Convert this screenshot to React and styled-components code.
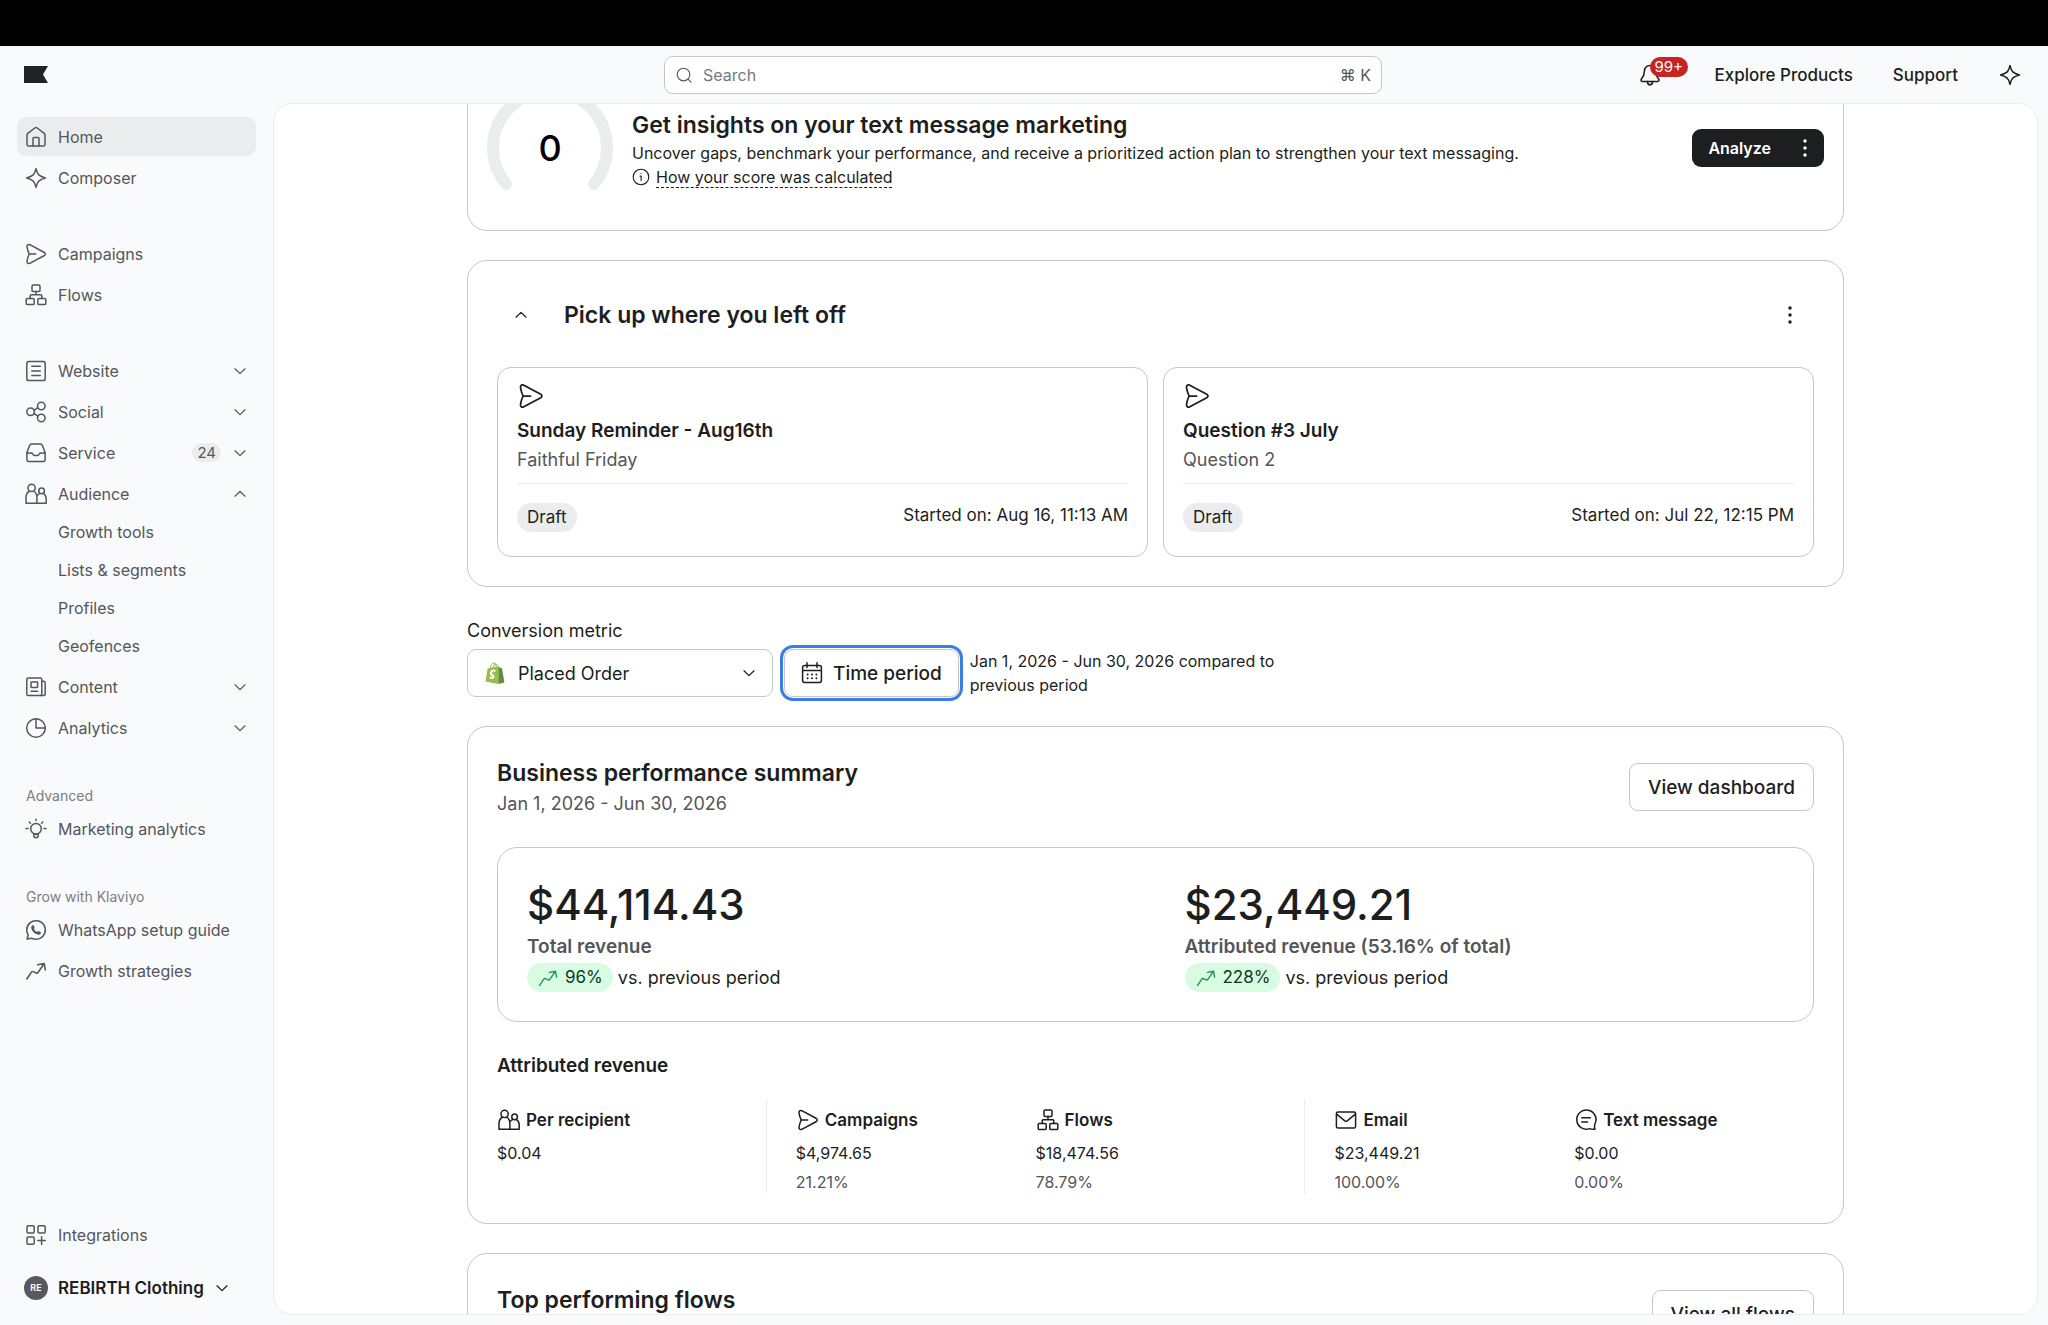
import React, { useLayoutEffect, useRef } from 'react';
import styled, { createGlobalStyle, css } from 'styled-components';

const ink = '#1d1e20';
const muted = '#54565a';
const line = '#c3c6ce';
const soft = '#ebecee';
const canvas = '#f9fafc';

const GlobalStyle = createGlobalStyle`
  * {
    box-sizing: border-box;
  }
  body {
    margin: 0;
    background: ${canvas};
    color: ${ink};
    font-family: Inter, "Liberation Sans", sans-serif;
    font-size: 16px;
  }
  h1, h2, h3, p, ul, dl, dd, dt {
    margin: 0;
    padding: 0;
  }
  button, input, select {
    font: inherit;
    color: inherit;
  }
  button {
    cursor: pointer;
  }
  a {
    color: inherit;
    text-decoration: none;
  }
`;

/* ---------- icons ---------- */

const Svg = styled.svg`
  display: block;
  flex: none;
  fill: none;
  stroke: currentColor;
  stroke-width: 1.5;
  stroke-linecap: round;
  stroke-linejoin: round;
`;

const shapes = {
  home: (
    <>
      <path d="M3 10.2Q3 8.9 4 8.1L10.8 3Q12 2.2 13.2 3L20 8.1Q21 8.9 21 10.2V19.4Q21 21 19.4 21H4.6Q3 21 3 19.4Z" />
      <path d="M9 21V13.4Q9 12.5 9.9 12.5H14.1Q15 12.5 15 13.4V21" />
    </>
  ),
  sparkle: (
    <path d="M12 2.6C12.6 5 13.4 7.4 14.8 8.9C16.4 10.4 18.8 11.3 21.4 12C18.8 12.7 16.4 13.6 14.8 15.1C13.4 16.6 12.6 19 12 21.4C11.4 19 10.6 16.6 9.2 15.1C7.6 13.6 5.2 12.7 2.6 12C5.2 11.3 7.6 10.4 9.2 8.9C10.6 7.4 11.4 5 12 2.6Z" />
  ),
  send: (
    <>
      <path d="M5.8 2.7L20.4 10.5Q22.4 12 20.4 13.5L5.8 21.3Q2.9 22.2 3 19.2Q3.6 15.4 5.2 12Q3.6 8.6 3 4.8Q2.9 1.8 5.8 2.7Z" />
      <path d="M5.2 12H11.6" />
    </>
  ),
  flows: (
    <>
      <rect x="8" y="2" width="8" height="6.4" rx="1.2" />
      <rect x="2.2" y="15.4" width="8" height="6.2" rx="1.2" />
      <rect x="13.8" y="15.4" width="8" height="6.2" rx="1.2" />
      <path d="M12 8.4V11.8M6.2 15.4V12.8Q6.2 11.8 7.2 11.8H16.8Q17.8 11.8 17.8 12.8V15.4" />
    </>
  ),
  page: (
    <>
      <rect x="2.8" y="2.5" width="18.4" height="19" rx="1.8" />
      <path d="M7.8 7.3H16.3M7.8 12H16.3M7.8 16.5H16.3" />
    </>
  ),
  share: (
    <>
      <circle cx="6.6" cy="11.8" r="3.8" />
      <circle cx="17.3" cy="6" r="3.8" />
      <circle cx="17.3" cy="18" r="3.8" />
      <path d="M10.1 10.3L13.8 7.7M10.1 13.4L13.8 16.1" />
    </>
  ),
  inbox: (
    <>
      <path d="M5.6 4.6Q6.1 3 7.6 3H16.4Q17.9 3 18.4 4.6L21.1 11.5V18.6Q21.1 20.4 19.3 20.4H4.7Q2.9 20.4 2.9 18.6V11.5Z" />
      <path d="M2.9 11.9H7Q8.2 11.9 8.8 13Q9.4 14.4 10.8 14.4H13.2Q14.6 14.4 15.2 13Q15.8 11.9 17 11.9H21.1" />
    </>
  ),
  people: (
    <>
      <circle cx="7.6" cy="5.9" r="3.6" />
      <path d="M5.6 9C3 10.6 2 12.6 2 15.6V21.2H22.2V17C22.2 14.4 21.2 12.6 19.2 11.4M9.6 9C12 10.6 12.9 12.6 12.9 15.6V21.2M13.4 13.3Q14.2 12 15.9 11.4" />
      <circle cx="17.6" cy="8.9" r="2.8" />
    </>
  ),
  content: (
    <>
      <rect x="2.8" y="3" width="15" height="17.6" rx="1.6" />
      <path d="M17.8 6.2H19.4Q21.2 6.2 21.2 8V18.8Q21.2 20.6 19.4 20.6H16.4" />
      <rect x="7" y="7" width="6.6" height="5.4" rx=".6" />
      <path d="M7 16.3H13.6" />
    </>
  ),
  pie: (
    <>
      <circle cx="12" cy="12" r="9.3" />
      <path d="M12 2.7V12H21.3" />
    </>
  ),
  bulb: (
    <>
      <path d="M9.8 17V18.6Q9.8 20.8 12 20.8Q14.2 20.8 14.2 18.6V17M12 2.2V3.4M2 11.4H4M20 11.4H22M5.2 5L6.4 6.2M18.8 5L17.6 6.2M9.8 17.2H14.2" />
      <circle cx="12" cy="11.8" r="5.3" />
    </>
  ),
  whatsapp: (
    <>
      <path d="M3 21L4.2 17Q2.7 14.6 2.7 12A9.3 9.3 0 1 1 7.6 20.2Z" />
      <path
        d="M8.6 7.2Q9.4 6.8 9.8 7.6L10.6 9.4Q10.8 9.9 10.4 10.4L9.9 11Q11 13 13.1 14L13.9 13.3Q14.3 12.9 14.9 13.2L16.5 14.1Q17.1 14.5 16.8 15.2Q16 16.9 14.1 16.7Q8.2 15.4 7.2 10Q7 8 8.6 7.2Z"
        fill="currentColor"
        stroke="none"
      />
    </>
  ),
  trend: <path d="M2.8 20L7.6 13Q8.2 12.2 9.2 12.6L12.4 14Q13.4 14.4 14 13.5L20 4.8M13.6 5.8L20.2 4.6L21.4 11" />,
  apps: (
    <>
      <rect x="3" y="2.8" width="7.2" height="7.2" rx="1.2" />
      <rect x="14" y="2.8" width="7.2" height="7.2" rx="1.2" />
      <rect x="3" y="14" width="7.2" height="7.2" rx="1.2" />
      <path d="M17.6 13.8V21.4M13.8 17.6H21.4" />
    </>
  ),
  bell: (
    <>
      <path d="M12 2.4C8.6 2.4 6.6 4.8 6.4 8.4C6.2 12 5.4 13.6 3.6 15.8C2.6 17.2 2.8 18.4 4.4 18.4H19.6C21.2 18.4 21.4 17.2 20.4 15.8C18.6 13.6 17.8 12 17.6 8.4C17.4 4.8 15.4 2.4 12 2.4Z" />
      <path d="M9.4 18.6Q9.6 21.8 12 21.8Q14.4 21.8 14.6 18.6" />
    </>
  ),
  search: (
    <>
      <circle cx="11.4" cy="11.4" r="8.4" />
      <path d="M17.4 17.4L21.4 21.4" />
    </>
  ),
  info: (
    <>
      <circle cx="12" cy="12" r="10.4" />
      <path d="M10.6 10.8H12.2V16.6M12.1 7.2V7.4" />
    </>
  ),
  calendar: (
    <>
      <path d="M2.6 6.4Q2.6 4.4 4.6 4.4H19.4Q21.4 4.4 21.4 6.4V19.4Q21.4 21.4 19.4 21.4H4.6Q2.6 21.4 2.6 19.4ZM2.6 9.4H21.4M7 1.8V6.4M17 1.8V6.4" />
      <path d="M7.6 13.4V13.5M12 13.4V13.5M16.4 13.4V13.5M7.6 17.2V17.3M12 17.2V17.3M16.4 17.2V17.3" strokeWidth="2" />
    </>
  ),
  mail: (
    <>
      <rect x="2.4" y="4" width="19.2" height="16" rx="1.6" />
      <path d="M3 6.4L10.8 12.8Q12 13.6 13.2 12.8L21 6.4" />
    </>
  ),
  message: (
    <>
      <path d="M20.8 16.2A9.6 9.6 0 1 0 15.6 20.6Q18 21.6 21 21.2Q20 19 20.8 16.2Z" />
      <path d="M7.8 9.8H16.2M7.8 14H13.6" />
    </>
  ),
  dots: (
    <g fill="currentColor" stroke="none">
      <circle cx="12" cy="3.6" r="2.1" />
      <circle cx="12" cy="12" r="2.1" />
      <circle cx="12" cy="20.4" r="2.1" />
    </g>
  ),
};

const Icon = ({ name, size = 24 }) => (
  <Svg width={size} height={size} viewBox="0 0 24 24" aria-hidden="true">
    {shapes[name]}
  </Svg>
);

const Chevron = ({ up }) => (
  <Svg width="12" height="12" viewBox="0 0 12 12" aria-hidden="true">
    <path d={up ? 'M1 8.2L6 3.4L11 8.2' : 'M1 3.8L6 8.6L11 3.8'} strokeWidth="1.25" />
  </Svg>
);

const ShopifyBag = () => (
  <svg width="20" height="22" viewBox="0 0 20 22" aria-hidden="true">
    <path d="M5 6.4C5.4 3.4 7.2 1 9 1C10.6 1 11.2 3 11.2 5.4M7.8 5.8C8.2 3.4 9.6 2 10.8 2C12 2 12.4 3.2 12.6 4.4" fill="none" stroke="#95bf47" strokeWidth="1" />
    <path d="M2.6 6.6L13.2 4.2L13.4 22L.4 19.6Z" fill="#95bf47" />
    <path d="M13.2 4.2L15 5.8L17 6L19.4 20.6L13.4 22Z" fill="#5e8e3e" />
    <path d="M10.4 8.9Q7.4 7.8 6.1 10Q5.4 12 7.4 13Q9.2 14.2 8 15.6Q6.8 16.4 4.8 15.2" fill="none" stroke="#fff" strokeWidth="2.1" />
  </svg>
);

/* ---------- frame ---------- */

const Shell = styled.div`
  height: 100vh;
  display: flex;
  flex-direction: column;
`;

const TopStrip = styled.div`
  height: 46px;
  flex: none;
  background: #000;
`;

const Header = styled.header`
  flex: none;
  height: 57px;
  padding: 0 26px 0 24px;
  display: grid;
  grid-template-columns: 1fr minmax(0, 718px) 1fr;
  align-items: center;
`;

const SearchBox = styled.label`
  height: 38px;
  padding: 0 10px;
  display: flex;
  align-items: center;
  gap: 10px;
  background: #fff;
  border: 1px solid ${line};
  border-radius: 9px;
  color: ${muted};

  input {
    flex: 1;
    min-width: 0;
    padding: 0;
    border: 0;
    outline: 0;
    background: none;
  }
  input::placeholder {
    color: #76787c;
    opacity: 1;
  }
  kbd {
    font: inherit;
  }
`;

const HeaderActions = styled.nav`
  display: flex;
  justify-content: flex-end;
  align-items: center;
  gap: 40px;
  font-size: 17px;
  font-weight: 500;
`;

const IconButton = styled.button`
  position: relative;
  display: flex;
  padding: 0;
  border: 0;
  background: none;
`;

const AlertCount = styled.span`
  position: absolute;
  left: 12px;
  top: -6px;
  padding: 0 5px;
  border-radius: 10px;
  background: #c82222;
  color: #fff;
  font-size: 15px;
  font-weight: 400;
  line-height: 20px;
`;

const AlertButton = styled(IconButton)`
  margin-right: 13px;
`;

const Body = styled.div`
  flex: 1;
  min-height: 0;
  display: flex;
  padding: 0 10px 10px 0;
`;

/* ---------- sidebar ---------- */

const Sidebar = styled.nav`
  width: 273px;
  flex: none;
  padding: 14px 17px 8px;
  display: flex;
  flex-direction: column;
  color: ${muted};
`;

const NavGroup = styled.div`
  display: flex;
  flex-direction: column;
  gap: 2px;
  margin-bottom: 37px;
`;

const NavLabel = styled.h3`
  padding-left: 9px;
  font-size: 14px;
  font-weight: 400;
  line-height: 23px;
  color: #7b7d81;
`;

const NavItem = styled.a`
  height: 39px;
  padding: 0 10px 0 7px;
  display: flex;
  align-items: center;
  gap: 10px;
  border-radius: 9px;
  background: ${(props) => (props.$active ? soft : 'transparent')};
`;

const NavText = styled.span`
  flex: 1;
  white-space: nowrap;
`;

const NavCount = styled.span`
  padding: 0 5px;
  margin-right: 3px;
  border-radius: 10px;
  background: ${soft};
  font-size: 15px;
  line-height: 19px;
`;

const SubList = styled.ul`
  list-style: none;
  margin-top: -2px;

  a {
    display: block;
    padding-left: 41px;
    line-height: 38px;
  }
`;

const NavFoot = styled.div`
  margin-top: auto;
  display: flex;
  flex-direction: column;
  gap: 14px;
`;

const Account = styled.button`
  height: 39px;
  padding: 0 7px;
  display: flex;
  align-items: center;
  gap: 10px;
  border: 0;
  background: none;
  color: ${ink};
  font-size: 17px;
  font-weight: 600;

  > svg {
    margin-left: 2px;
  }
`;

const Avatar = styled.span`
  width: 24px;
  height: 24px;
  border-radius: 50%;
  background: #58595c;
  color: #fff;
  font-size: 9px;
  line-height: 24px;
  text-align: center;
`;

const navGroups = [
  {
    items: [
      { icon: 'home', text: 'Home', active: true },
      { icon: 'sparkle', text: 'Composer' },
    ],
  },
  {
    items: [
      { icon: 'send', text: 'Campaigns' },
      { icon: 'flows', text: 'Flows' },
    ],
  },
  {
    items: [
      { icon: 'page', text: 'Website', fold: 'down' },
      { icon: 'share', text: 'Social', fold: 'down' },
      { icon: 'inbox', text: 'Service', fold: 'down', count: 24 },
      {
        icon: 'people',
        text: 'Audience',
        fold: 'up',
        children: ['Growth tools', 'Lists & segments', 'Profiles', 'Geofences'],
      },
      { icon: 'content', text: 'Content', fold: 'down' },
      { icon: 'pie', text: 'Analytics', fold: 'down' },
    ],
  },
  { label: 'Advanced', items: [{ icon: 'bulb', text: 'Marketing analytics' }] },
  {
    label: 'Grow with Klaviyo',
    items: [
      { icon: 'whatsapp', text: 'WhatsApp setup guide' },
      { icon: 'trend', text: 'Growth strategies' },
    ],
  },
];

const NavEntry = ({ item }) => (
  <>
    <NavItem href="#" $active={item.active}>
      <Icon name={item.icon} />
      <NavText>{item.text}</NavText>
      {item.count && <NavCount>{item.count}</NavCount>}
      {item.fold && <Chevron up={item.fold === 'up'} />}
    </NavItem>
    {item.children && (
      <SubList>
        {item.children.map((child) => (
          <li key={child}>
            <a href="#">{child}</a>
          </li>
        ))}
      </SubList>
    )}
  </>
);

/* ---------- content ---------- */

const Panel = styled.main`
  flex: 1;
  min-width: 0;
  overflow-y: auto;
  scrollbar-width: none;
  background: #fff;
  border: 1px solid #e9ebee;
  border-radius: 20px;
`;

const Column = styled.div`
  max-width: 1377px;
  margin: 0 auto;
  padding: 24px 0;
  display: flex;
  flex-direction: column;
  gap: 29px;
`;

const Card = styled.section`
  padding: 29px;
  border: 1px solid ${line};
  border-radius: 20px;
`;

const ScoreCard = styled(Card)`
  padding: 19px;
  display: flex;
  align-items: center;
  gap: 19px;
`;

const Gauge = styled.svg`
  flex: none;
  width: 126px;
  height: 126px;

  path {
    fill: none;
    stroke: ${soft};
    stroke-width: 12;
    stroke-linecap: round;
  }
  text {
    fill: #000;
    font-size: 36px;
    font-weight: 500;
    text-anchor: middle;
  }
`;

const ScoreText = styled.div`
  flex: 1;
  padding-top: 2px;
  line-height: 24px;
`;

const Title = styled.h2`
  font-size: 23px;
  font-weight: 600;
  line-height: 32px;
`;

const HelpLine = styled.p`
  display: flex;
  align-items: center;
  gap: 6px;

  a {
    text-decoration: underline dashed 1px;
    text-underline-offset: 4px;
  }
`;

const SplitButton = styled.div`
  display: flex;
  height: 38px;
  border-radius: 9px;
  overflow: hidden;

  button {
    padding: 0 16px;
    display: flex;
    align-items: center;
    border: 0;
    background: ${ink};
    color: #fff;
    font-weight: 600;
  }
  button + button {
    padding: 0 9px 0 8px;
  }
`;

const FoldHead = styled.div`
  height: 50px;
  padding: 0 14px 0 18px;
  display: flex;
  align-items: center;
  margin-bottom: 27px;

  h2 {
    flex: 1;
    margin-left: 37px;
  }
`;

const DraftGrid = styled.div`
  display: grid;
  grid-template-columns: 1fr 1fr;
  gap: 15px;
`;

const DraftCard = styled.article`
  padding: 14px 19px 24px;
  border: 1px solid ${line};
  border-radius: 14px;
  font-size: 18px;
  line-height: 29px;

  > svg {
    margin-bottom: 6px;
  }
  h3 {
    font-size: 19px;
    font-weight: 600;
  }
  p {
    color: ${muted};
  }
`;

const DraftFoot = styled.div`
  margin-top: 9px;
  padding-top: 19px;
  border-top: 1px solid ${soft};
  display: flex;
  justify-content: space-between;
  align-items: flex-start;
  font-size: 17px;
  line-height: 24px;
`;

const pill = css`
  padding: 0 10px;
  border-radius: 15px;
  font-size: 17px;
  line-height: 29px;
`;

const Tag = styled.span`
  ${pill}
  background: ${soft};
`;

const Rise = styled.span`
  ${pill}
  display: inline-flex;
  align-items: center;
  gap: 6px;
  background: #d9fbe2;
  color: #0c3a22;

  svg {
    color: #1f9254;
  }
`;

const Filters = styled.div`
  font-size: 18px;

  > label {
    display: block;
    line-height: 29px;
    margin-bottom: 4px;
  }
`;

const FilterRow = styled.div`
  display: flex;
  align-items: center;
  gap: 11px;
`;

const outlined = css`
  height: 48px;
  border: 1px solid ${line};
  border-radius: 9px;
  background: #fff;
`;

const SelectBox = styled.div`
  display: grid;
  grid-template: 1fr / 18px 20px 1fr 12px 18px;
  width: 306px;
  align-items: center;

  > * {
    grid-row: 1;
  }
  > svg {
    z-index: 1;
    pointer-events: none;
  }
  > svg:first-of-type {
    grid-column: 2;
  }
  > svg:last-of-type {
    grid-column: 4;
  }
  select {
    ${outlined}
    grid-column: 1 / -1;
    width: 100%;
    padding: 0 50px;
    appearance: none;
  }
`;

const OutlineButton = styled.button`
  ${outlined}
  padding: 0 18px;
  font-size: 19px;
  font-weight: 500;
`;

const PeriodButton = styled(OutlineButton)`
  padding: 0 16px 0 15px;
  display: flex;
  align-items: center;
  gap: 9px;
  outline: 3px solid #3a7de8;
  outline-offset: 1px;
`;

const PeriodNote = styled.p`
  max-width: 320px;
  font-size: 16px;
  line-height: 24px;
`;

const CardHead = styled.div`
  display: flex;
  justify-content: space-between;
  align-items: center;

  > div {
    min-height: 62px;
  }
  h2 {
    line-height: 34px;
  }
  p {
    font-size: 18px;
    line-height: 28px;
    color: ${muted};
  }
`;

const Totals = styled.div`
  margin: 29px 0;
  display: grid;
  grid-template-columns: 1fr 1fr;
  border: 1px solid ${line};
  border-radius: 20px;
`;

const Total = styled.div`
  padding: 29px;
  font-size: 18px;

  strong {
    display: block;
    font-size: 42px;
    font-weight: 500;
    line-height: 55px;
  }
  h3 {
    margin-bottom: 1px;
    font-size: 19px;
    font-weight: 600;
    line-height: 30px;
    color: ${muted};
  }
  p {
    display: flex;
    align-items: center;
    gap: 5px;
  }
`;

const SectionTitle = styled.h3`
  font-size: 19px;
  font-weight: 600;
  line-height: 30px;
`;

const Metrics = styled.dl`
  margin-top: 18px;
  display: flex;
  gap: 29px;
`;

const Metric = styled.div`
  flex: 1 1 0;
  padding-top: 9px;
  line-height: 24px;

  dt {
    display: flex;
    gap: 5px;
    margin-bottom: 9px;
    font-size: 17px;
    font-weight: 600;
  }
  dd + dd {
    margin-top: 5px;
    color: ${muted};
  }
`;

const MetricPair = styled.div`
  flex: 2 1 0;
  display: flex;
`;

const Divider = styled.div`
  width: 1px;
  background: ${soft};
`;

const MetricCell = ({ icon, name, value, share }) => (
  <Metric>
    <dt>
      <Icon name={icon} />
      {name}
    </dt>
    <dd>{value}</dd>
    {share && <dd>{share}</dd>}
  </Metric>
);

const Draft = ({ title, subtitle, started }) => (
  <DraftCard>
    <Icon name="send" size={28} />
    <h3>{title}</h3>
    <p>{subtitle}</p>
    <DraftFoot>
      <Tag>Draft</Tag>
      <span>Started on: {started}</span>
    </DraftFoot>
  </DraftCard>
);

const TotalCell = ({ amount, label, change }) => (
  <Total>
    <strong>{amount}</strong>
    <h3>{label}</h3>
    <p>
      <Rise>
        <Icon name="trend" size={22} />
        {change}
      </Rise>
      vs. previous period
    </p>
  </Total>
);

function App() {
  const panel = useRef(null);

  // the page opens a little way down, past the top of the score card
  useLayoutEffect(() => {
    panel.current.scrollTop = 63;
  }, []);

  return (
    <>
      <GlobalStyle />
      <Shell>
        <TopStrip />
        <Header>
          <svg width="24" height="17" viewBox="0 0 24 17" role="img" aria-label="Klaviyo">
            <path d="M0 0H24L19 8.5L24 17H0Z" fill="#222325" />
          </svg>
          <SearchBox>
            <Icon name="search" size={18} />
            <input type="text" placeholder="Search" aria-label="Search" />
            <kbd>⌘ K</kbd>
          </SearchBox>
          <HeaderActions>
            <AlertButton aria-label="Notifications">
              <Icon name="bell" />
              <AlertCount>99+</AlertCount>
            </AlertButton>
            <a href="#">Explore Products</a>
            <a href="#">Support</a>
            <IconButton aria-label="Assistant">
              <Icon name="sparkle" />
            </IconButton>
          </HeaderActions>
        </Header>

        <Body>
          <Sidebar>
            {navGroups.map((group, i) => (
              <NavGroup key={i}>
                {group.label && <NavLabel>{group.label}</NavLabel>}
                {group.items.map((item) => (
                  <NavEntry key={item.text} item={item} />
                ))}
              </NavGroup>
            ))}
            <NavFoot>
              <NavEntry item={{ icon: 'apps', text: 'Integrations' }} />
              <Account>
                <Avatar>RE</Avatar>
                REBIRTH Clothing
                <Chevron />
              </Account>
            </NavFoot>
          </Sidebar>

          <Panel ref={panel}>
            <Column>
              <ScoreCard>
                <Gauge viewBox="0 0 126 126">
                  <path d="M19 99A57 57 0 1 1 107 99" />
                  <text x="63" y="76">0</text>
                </Gauge>
                <ScoreText>
                  <Title>Get insights on your text message marketing</Title>
                  <p>
                    Uncover gaps, benchmark your performance, and receive a prioritized action plan to strengthen your text messaging.
                  </p>
                  <HelpLine>
                    <Icon name="info" size={18} />
                    <a href="#">How your score was calculated</a>
                  </HelpLine>
                </ScoreText>
                <SplitButton>
                  <button>Analyze</button>
                  <button aria-label="More options">
                    <Icon name="dots" size={20} />
                  </button>
                </SplitButton>
              </ScoreCard>

              <Card>
                <FoldHead>
                  <IconButton aria-label="Collapse">
                    <Chevron up />
                  </IconButton>
                  <Title>Pick up where you left off</Title>
                  <IconButton aria-label="More options">
                    <Icon name="dots" size={20} />
                  </IconButton>
                </FoldHead>
                <DraftGrid>
                  <Draft title="Sunday Reminder - Aug16th" subtitle="Faithful Friday" started="Aug 16, 11:13 AM" />
                  <Draft title="Question #3 July" subtitle="Question 2" started="Jul 22, 12:15 PM" />
                </DraftGrid>
              </Card>

              <Filters>
                <label htmlFor="metric">Conversion metric</label>
                <FilterRow>
                  <SelectBox>
                    <ShopifyBag />
                    <select id="metric">
                      <option>Placed Order</option>
                    </select>
                    <Chevron />
                  </SelectBox>
                  <PeriodButton>
                    <Icon name="calendar" />
                    Time period
                  </PeriodButton>
                  <PeriodNote>Jan 1, 2026 - Jun 30, 2026 compared to previous period</PeriodNote>
                </FilterRow>
              </Filters>

              <Card>
                <CardHead>
                  <div>
                    <Title>Business performance summary</Title>
                    <p>Jan 1, 2026 - Jun 30, 2026</p>
                  </div>
                  <OutlineButton>View dashboard</OutlineButton>
                </CardHead>
                <Totals>
                  <TotalCell amount="$44,114.43" label="Total revenue" change="96%" />
                  <TotalCell amount="$23,449.21" label="Attributed revenue (53.16% of total)" change="228%" />
                </Totals>
                <SectionTitle>Attributed revenue</SectionTitle>
                <Metrics>
                  <MetricCell icon="people" name="Per recipient" value="$0.04" />
                  <Divider />
                  <MetricPair>
                    <MetricCell icon="send" name="Campaigns" value="$4,974.65" share="21.21%" />
                    <MetricCell icon="flows" name="Flows" value="$18,474.56" share="78.79%" />
                  </MetricPair>
                  <Divider />
                  <MetricPair>
                    <MetricCell icon="mail" name="Email" value="$23,449.21" share="100.00%" />
                    <MetricCell icon="message" name="Text message" value="$0.00" share="0.00%" />
                  </MetricPair>
                </Metrics>
              </Card>

              <Card>
                <CardHead>
                  <div>
                    <Title>Top performing flows</Title>
                  </div>
                  <OutlineButton>View all flows</OutlineButton>
                </CardHead>
              </Card>
            </Column>
          </Panel>
        </Body>
      </Shell>
    </>
  );
}

export default App;
